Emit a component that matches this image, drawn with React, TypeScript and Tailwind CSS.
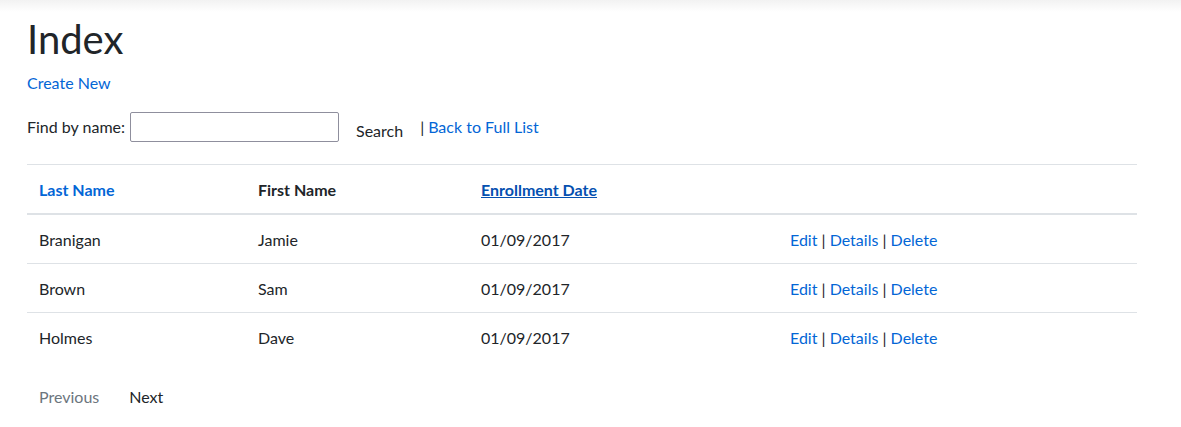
const students = [
  { last: "Branigan", first: "Jamie", date: "01/09/2017" },
  { last: "Brown", first: "Sam", date: "01/09/2017" },
  { last: "Holmes", first: "Dave", date: "01/09/2017" },
];

export default function App() {
  return (
    <div
      className="relative min-h-[427px] bg-white text-[16px] leading-6 text-[#212529]"
      style={{ fontFamily: "Lato, 'Open Sans', sans-serif" }}
    >
      {/* navbar shadow */}
      <div className="pointer-events-none absolute inset-x-0 top-0 h-[12px] bg-gradient-to-b from-[#f2f2f2] to-white" />

      <main className="px-[27px] pt-[15px]">
        <h1 className="mb-2 text-[40px] font-normal leading-[48px]">Index</h1>

        <p className="mb-4">
          <a href="#" className="text-[#0366d6]">
            Create New
          </a>
        </p>

        <form className="flex h-[32px] items-center">
          <label>Find by name:</label>
          <input
            type="text"
            className="ml-[5px] h-[30px] w-[209px] rounded-[2px] border border-[#8f8f9d] px-1"
          />
          <button type="button" className="ml-[5px] px-3 pt-[8px]">
            Search
          </button>
          <span className="ml-[5px]">|</span>
          <a href="#" className="ml-[4px] text-[#0366d6]">
            Back to Full List
          </a>
        </form>

        <table className="mt-[21px] w-[1110px] table-fixed border-collapse">
          <colgroup>
            <col className="w-[219px]" />
            <col className="w-[223px]" />
            <col className="w-[309px]" />
            <col />
          </colgroup>
          <thead>
            <tr className="border-t border-b-2 border-t-[#dee2e6] border-b-[#dee2e6]">
              <th className="px-3 pt-[13px] pb-[11px] text-left font-bold">
                <a href="#" className="text-[#0366d6]">
                  Last Name
                </a>
              </th>
              <th className="px-3 pt-[13px] pb-[11px] text-left font-bold">First Name</th>
              <th className="px-3 pt-[13px] pb-[11px] text-left font-bold">
                <a href="#" className="text-[#0550b0] underline">
                  Enrollment Date
                </a>
              </th>
              <th className="px-3 pt-[13px] pb-[11px]" />
            </tr>
          </thead>
          <tbody>
            {students.map((s, i) => (
              <tr key={i} className={i > 0 ? "border-t border-[#dee2e6]" : ""}>
                <td className="px-3 pt-[13px] pb-[11px]">{s.last}</td>
                <td className="px-3 pt-[13px] pb-[11px]">{s.first}</td>
                <td className="px-3 pt-[13px] pb-[11px]">{s.date}</td>
                <td className="px-3 pt-[13px] pb-[11px]">
                  <a href="#" className="text-[#0366d6]">Edit</a> |{" "}
                  <a href="#" className="text-[#0366d6]">Details</a> |{" "}
                  <a href="#" className="text-[#0366d6]">Delete</a>
                </td>
              </tr>
            ))}
          </tbody>
        </table>

        <div className="mt-[18px] flex gap-[6px]">
          <span className="px-3 py-1.5 text-[#6c757d]">Previous</span>
          <a href="#" className="px-3 py-1.5 text-[#212529]">
            Next
          </a>
        </div>
      </main>
    </div>
  );
}
